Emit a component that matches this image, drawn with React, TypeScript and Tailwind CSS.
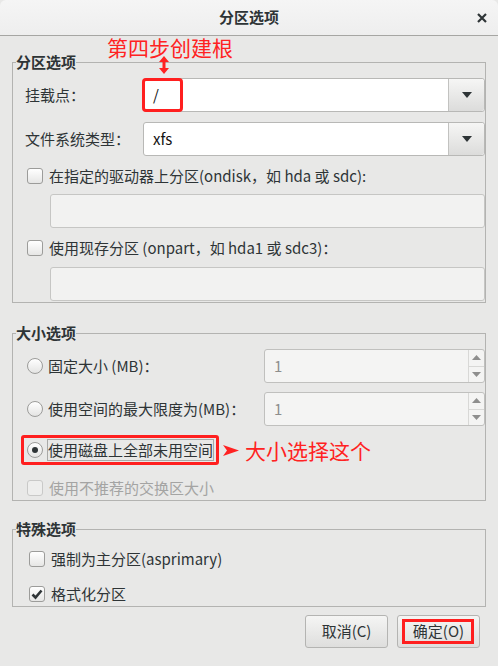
import React from 'react';

const red = 'border-[#ff1f1f]';

function Checkbox({ checked = false, disabled = false }: { checked?: boolean; disabled?: boolean }) {
  return (
    <span
      className={`relative flex h-[16px] w-[16px] shrink-0 items-center justify-center rounded-[3px] border ${
        disabled ? 'border-[#c9c9c8] bg-[#eeeeed]' : 'border-[#9c9c9a] bg-gradient-to-b from-white to-[#e6e6e5]'
      }`}
    >
      {checked && (
        <svg width="12" height="11" viewBox="0 0 12 11">
          <path d="M1.5 5.5 L4.5 8.5 L10.5 1.5" fill="none" stroke="#2e3436" strokeWidth="2.6" />
        </svg>
      )}
    </span>
  );
}

function Radio({ checked = false }: { checked?: boolean }) {
  return (
    <span className="flex h-[16px] w-[16px] shrink-0 items-center justify-center rounded-full border border-[#9c9c9a] bg-gradient-to-b from-white to-[#e4e4e3]">
      {checked && <span className="h-[6px] w-[6px] rounded-full bg-[#2e3436]" />}
    </span>
  );
}

function Combo({ value, children }: { value: string; children?: React.ReactNode }) {
  return (
    <div className="flex h-[34px] flex-1 overflow-visible rounded-[3px] border border-[#b8b8b6] bg-white">
      <div className="relative flex flex-1 items-center pl-[9px] text-[15px] text-[#111]">
        {value}
        {children}
      </div>
      <div className="flex w-[36px] items-center justify-center rounded-r-[3px] border-l border-[#c2c2c0] bg-gradient-to-b from-[#f6f6f5] to-[#dcdcdb]">
        <svg width="10" height="6" viewBox="0 0 10 6">
          <path d="M0 0 H10 L5 6 Z" fill="#2e3436" />
        </svg>
      </div>
    </div>
  );
}

function Spin() {
  return (
    <div className="ml-auto flex h-[34px] w-[221px] rounded-[3px] border border-[#c0c0be] bg-[#f4f4f3]">
      <div className="flex flex-1 items-center pl-[9px] text-[15px] text-[#8e8e8d]">1</div>
      <div className="flex w-[16px] flex-col border-l border-[#d8d8d6]">
        <div className="flex flex-1 items-center justify-center border-b border-[#d8d8d6]">
          <svg width="9" height="5" viewBox="0 0 9 5">
            <path d="M0 5 H9 L4.5 0 Z" fill="#8e8e8d" />
          </svg>
        </div>
        <div className="flex flex-1 items-center justify-center">
          <svg width="9" height="5" viewBox="0 0 9 5">
            <path d="M0 0 H9 L4.5 5 Z" fill="#8e8e8d" />
          </svg>
        </div>
      </div>
    </div>
  );
}

function Frame({ title, children, className = '' }: { title: string; children: React.ReactNode; className?: string }) {
  return (
    <fieldset className={`mx-[12px] w-[474px] border border-[#b3b3b1] ${className}`}>
      <legend className="ml-[3px] h-[20px] px-0 text-[15px] font-bold leading-[20px] text-[#2e3436]">{title}</legend>
      {children}
    </fieldset>
  );
}

function Button({ label, marked = false }: { label: string; marked?: boolean }) {
  return (
    <button className="relative flex h-[33px] w-[83px] items-center justify-center rounded-[3px] border border-[#b4b4b2] bg-gradient-to-b from-[#f5f5f4] to-[#dededd] text-[15px] text-[#2e3436]">
      {label}
      {marked && <span className={`absolute left-[4px] top-[3px] h-[25px] w-[72px] border-[3px] ${red}`} />}
    </button>
  );
}

export default function App() {
  return (
    <div
      className="relative flex h-[666px] w-[498px] flex-col bg-[#e8e8e7] text-[#2e3436]"
      style={{ fontFamily: '"Noto Sans CJK SC", "Noto Sans", sans-serif' }}
    >
      <header className="relative flex h-[36px] shrink-0 items-center justify-center rounded-t-[6px] border-b border-[#a6a6a3] bg-gradient-to-b from-[#f5f5f5] to-[#eeeeee]">
        <span className="text-[15px] font-bold text-[#2e3436]">分区选项</span>
        <svg className="absolute right-[11px] top-[13px]" width="10" height="10" viewBox="0 0 10 10">
          <path d="M1 1 L9 9 M9 1 L1 9" stroke="#2e3436" strokeWidth="2.2" />
        </svg>
      </header>

      {/* 标注：第四步 */}
      <span className="absolute left-[107px] top-[34px] text-[21px] leading-[26px] text-[#ff2222]">第四步创建根</span>
      <svg className="absolute left-[158px] top-[56px]" width="12" height="18" viewBox="0 0 12 18">
        <path d="M6 0 L11 6 H7.5 V12 H11 L6 18 L1 12 H4.5 V6 H1 Z" fill="#ff2222" />
      </svg>

      <div className="flex flex-col pt-[16px]">
        <Frame title="分区选项" className="pb-[1px]">
          <div className="mt-[6px] flex items-center">
            <span className="w-[130px] pl-[12px] text-[15px]">挂载点：</span>
            <Combo value="/">
              <span className={`absolute left-[-2px] top-[-1px] h-[34px] w-[41px] rounded-[4px] border-[3px] ${red}`} />
            </Combo>
          </div>
          <div className="mt-[10px] flex items-center">
            <span className="w-[130px] pl-[12px] text-[15px]">文件系统类型：</span>
            <Combo value="xfs" />
          </div>
          <label className="mt-[10px] flex h-[20px] items-center gap-[6px] pl-[14px] text-[15px]">
            <Checkbox />
            在指定的驱动器上分区(ondisk，如 hda 或 sdc):
          </label>
          <div className="ml-[37px] mt-[8px] h-[34px] rounded-[3px] border border-[#c6c6c4] bg-[#f2f2f1]" />
          <label className="mt-[10px] flex h-[20px] items-center gap-[6px] pl-[14px] text-[15px]">
            <Checkbox />
            使用现存分区 (onpart，如 hda1 或 sdc3)：
          </label>
          <div className="ml-[37px] mt-[9px] h-[34px] rounded-[3px] border border-[#c6c6c4] bg-[#f2f2f1]" />
        </Frame>

        <Frame title="大小选项" className="mt-[20px] pb-[2px]">
          <div className="mt-[6px] flex items-center">
            <label className="flex items-center gap-[5px] pl-[14px] text-[15px]">
              <Radio />
              固定大小 (MB)：
            </label>
            <Spin />
          </div>
          <div className="mt-[9px] flex items-center">
            <label className="flex items-center gap-[5px] pl-[14px] text-[15px]">
              <Radio />
              使用空间的最大限度为(MB)：
            </label>
            <Spin />
          </div>
          <div className="mt-[9px] flex h-[30px] items-center">
            <div className={`relative ml-[8px] flex h-[30px] w-[198px] shrink-0 items-center rounded-[3px] border-[3px] ${red} pl-[3px]`}>
              <Radio checked />
              <span className="ml-[4px] flex h-[22px] items-center whitespace-nowrap border border-[#a9a9a7] text-[15px]">
                使用磁盘上全部未用空间
              </span>
            </div>
            <svg className="ml-[4px]" width="16" height="11" viewBox="0 0 16 11">
              <path d="M0 0 L16 5.5 L0 11 L4 5.5 Z" fill="#ff2222" />
            </svg>
            <span className="ml-[6px] text-[21px] leading-[26px] text-[#ff2222]">大小选择这个</span>
          </div>
          <label className="mt-[13px] flex h-[20px] items-center gap-[6px] pl-[14px] text-[15px] text-[#a4a4a3]">
            <Checkbox disabled />
            使用不推荐的交换区大小
          </label>
        </Frame>

        <Frame title="特殊选项" className="mt-[18px] pb-[2px]">
          <label className="mt-[10px] flex h-[20px] items-center gap-[6px] pl-[16px] text-[15px]">
            <Checkbox />
            强制为主分区(asprimary)
          </label>
          <label className="mt-[15px] flex h-[20px] items-center gap-[6px] pl-[16px] text-[15px]">
            <Checkbox checked />
            格式化分区
          </label>
        </Frame>

        <div className="mt-[8px] flex justify-end gap-[9px] pr-[18px]">
          <Button label="取消(C)" />
          <Button label="确定(O)" marked />
        </div>
      </div>
    </div>
  );
}
